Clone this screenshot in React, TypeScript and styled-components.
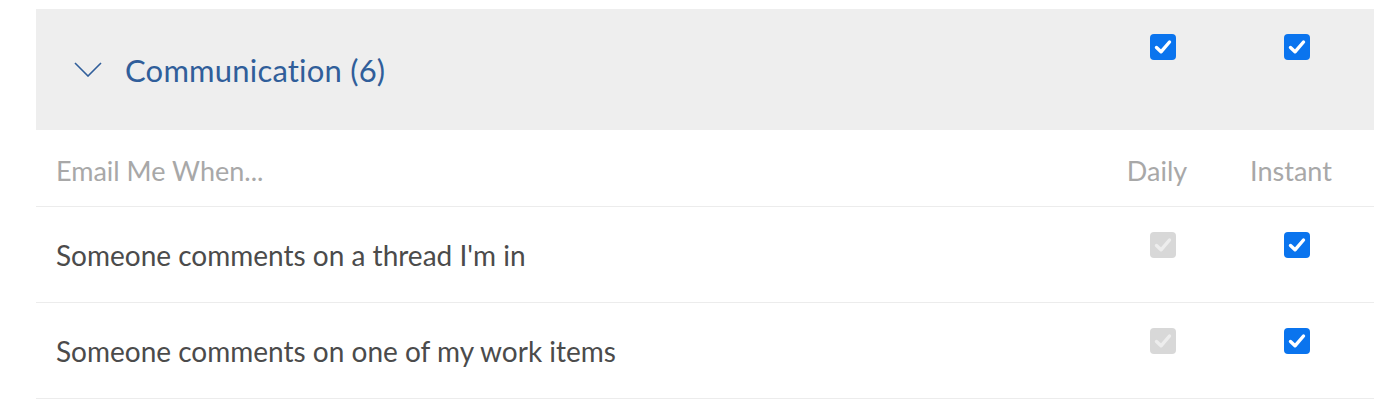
import React from 'react';
import styled, { createGlobalStyle } from 'styled-components';

const GlobalStyle = createGlobalStyle`
	body {
		margin: 0;
		padding: 9px 0 0 36px;
		background: #ffffff;
		font-family: Lato, "Open Sans", sans-serif;
	}
`;

const Section = styled.div`
	width: 1338px;
`;

const GroupHeader = styled.div`
	display: grid;
	grid-template-columns: 1fr 134px 134px;
	padding-right: 10px;
	height: 121px;
	background: #eeeeee;
`;

const Toggle = styled.div`
	display: flex;
	align-items: center;
	gap: 23px;
	padding-left: 38px;
	color: #305e9a;
	font-size: 31px;
	letter-spacing: 0.2px;
`;

const Row = styled.div<{ $head?: boolean }>`
	display: grid;
	grid-template-columns: 1fr 134px 134px;
	padding-right: 10px;
	height: ${(p) => (p.$head ? '76px' : '95px')};
	border-bottom: 1px solid #ececec;
`;

const Label = styled.div<{ $head?: boolean }>`
	display: flex;
	align-items: center;
	padding-left: 20px;
	padding-top: ${(p) => (p.$head ? '4px' : '0')};
	font-size: ${(p) => (p.$head ? '27px' : '28px')};
	color: ${(p) => (p.$head ? '#a8a8a8' : '#4b4b4b')};
`;

const ColHead = styled.div`
	display: flex;
	align-items: center;
	justify-content: center;
	padding-top: 4px;
	padding-right: 12px;
	font-size: 27px;
	color: #a8a8a8;
`;

const Cell = styled.div`
	display: flex;
	justify-content: center;
	padding-top: 25px;
`;

const Box = styled.span<{ $disabled?: boolean }>`
	display: flex;
	align-items: center;
	justify-content: center;
	width: 26px;
	height: 26px;
	border-radius: 4px;
	background: ${(p) => (p.$disabled ? '#d8d8d8' : '#0a74ee')};
	color: ${(p) => (p.$disabled ? '#ededed' : '#ffffff')};
`;

const Check = ({ disabled }: { disabled?: boolean }) => (
	<Box $disabled={disabled}>
		<svg width="18" height="16" viewBox="0 0 18 16">
			<path
				d="M2.5 8.5 L7 12.8 L15.5 3"
				fill="none"
				stroke="currentColor"
				strokeWidth="3.4"
				strokeLinecap="round"
				strokeLinejoin="round"
			/>
		</svg>
	</Box>
);

const Chevron = () => (
	<svg width="28" height="15" viewBox="0 0 28 15">
		<path d="M1 1 L14 14 L27 1" fill="none" stroke="#305e9a" strokeWidth="1.6" />
	</svg>
);

const rows = [
	"Someone comments on a thread I'm in",
	'Someone comments on one of my work items',
];

const App: React.FC = () => {
	return (
		<>
			<GlobalStyle />
			<Section>
				<GroupHeader>
					<Toggle>
						<Chevron />
						<span>Communication (6)</span>
					</Toggle>
					<Cell>
						<Check />
					</Cell>
					<Cell>
						<Check />
					</Cell>
				</GroupHeader>
				<Row $head>
					<Label $head>Email Me When...</Label>
					<ColHead>Daily</ColHead>
					<ColHead>Instant</ColHead>
				</Row>
				{rows.map((r) => (
					<Row key={r}>
						<Label>{r}</Label>
						<Cell>
							<Check disabled />
						</Cell>
						<Cell>
							<Check />
						</Cell>
					</Row>
				))}
			</Section>
		</>
	);
};

export default App;
